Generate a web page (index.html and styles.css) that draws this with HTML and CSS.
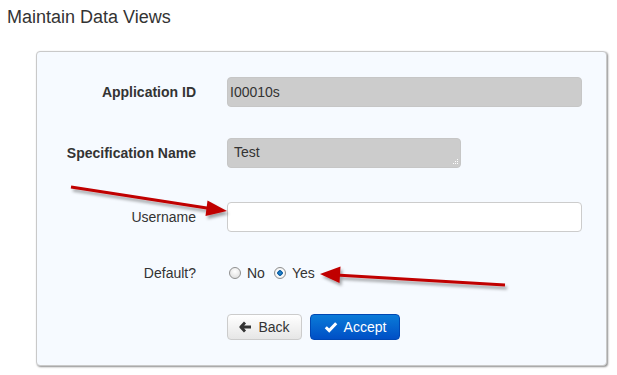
FILE: index.html
```html
<!DOCTYPE html>
<html lang="en">
<head>
  <meta charset="UTF-8">
  <meta name="viewport" content="width=device-width, initial-scale=1">
  <title>Maintain Data Views</title>
  <link rel="stylesheet" href="styles.css">
</head>

<body>
  <div class="page">
    <h1 class="page-title">Maintain Data Views</h1>

    <!-- Form panel -->
    <div class="panel">
      <div class="form-row row-app">
        <label class="form-label strong" for="app-id">Application ID</label>
        <input type="text" id="app-id" class="field field-ro" value="I00010s" readonly>
      </div>

      <div class="form-row row-spec">
        <label class="form-label strong" for="spec-name">Specification Name</label>
        <div class="area-wrap">
          <textarea id="spec-name" class="field field-ro field-area" readonly>Test</textarea>
          <svg class="grip" width="8" height="8" viewBox="0 0 8 8">
            <rect x="6" y="0" width="1" height="1" fill="#fff"/>
            <rect x="4" y="2" width="1" height="1" fill="#fff"/>
            <rect x="6" y="2" width="1" height="1" fill="#fff"/>
            <rect x="2" y="4" width="1" height="1" fill="#fff"/>
            <rect x="4" y="4" width="1" height="1" fill="#fff"/>
            <rect x="6" y="4" width="1" height="1" fill="#fff"/>
          </svg>
        </div>
      </div>

      <div class="form-row row-user">
        <label class="form-label" for="username">Username</label>
        <input type="text" id="username" class="field">
      </div>

      <div class="form-row row-default">
        <span class="form-label">Default?</span>
        <div class="radio-group">
          <label class="radio-opt"><input type="radio" name="def" class="radio"> No</label>
          <label class="radio-opt"><input type="radio" name="def" class="radio" checked> Yes</label>
        </div>
      </div>

      <div class="form-row row-actions">
        <span class="form-label"></span>
        <button class="btn btn-back">
          <svg width="13" height="12" viewBox="0 0 13 12"><path d="M6 1.5 L1.8 6 L6 10.5 M2.5 6 H12" fill="none" stroke="#333" stroke-width="2.8" stroke-linejoin="round"/></svg>
          Back
        </button>
        <button class="btn btn-accept">
          <svg width="14" height="12" viewBox="0 0 14 12"><path d="M1.8 6.2 L5.2 9.6 L12.2 2.2" fill="none" stroke="#fff" stroke-width="3"/></svg>
          Accept
        </button>
      </div>
    </div>

    <!-- Annotation arrows -->
    <svg class="arrows" width="617" height="375" viewBox="0 0 617 375">
      <defs>
        <filter id="shadow" x="-10%" y="-50%" width="120%" height="200%">
          <feDropShadow dx="2" dy="3" stdDeviation="1.5" flood-color="#000" flood-opacity="0.35"/>
        </filter>
      </defs>
      <g filter="url(#shadow)" fill="#c00000" stroke="#c00000">
        <line x1="71" y1="187" x2="210" y2="208.5" stroke-width="3"/>
        <polygon points="227,211 207.5,200.5 205.5,216" stroke="none"/>
        <line x1="505" y1="285" x2="336" y2="275" stroke-width="3"/>
        <polygon points="320,274 340.5,266.5 339.5,283" stroke="none"/>
      </g>
    </svg>
  </div>
</body>
</html>
```

FILE: styles.css
```css
* {
  margin: 0;
  padding: 0;
  box-sizing: border-box;
}
body {
  font-family: 'Liberation Sans', Arial, sans-serif;
  font-size: 14px;
  color: #333;
  background: #fff;
}
.page {
  position: relative;
  width: 617px;
  height: 375px;
}
.page-title {
  font-size: 18px;
  font-weight: normal;
  line-height: 20px;
  padding: 7px 0 0 7px;
  color: #333;
}

/* Panel */
.panel {
  margin: 24px 0 0 36px;
  width: 571px;
  height: 315px;
  padding-top: 25px;
  background: #f6faff;
  border: 1px solid #c9c9c9;
  border-radius: 4px;
  box-shadow: 1px 1px 2px rgba(0, 0, 0, 0.45);
}
.form-row {
  display: flex;
  align-items: center;
  height: 30px;
}
.row-app { margin-bottom: 31px; }
.row-spec { margin-bottom: 34px; }
.row-user { margin-bottom: 31px; }
.row-default { height: 20px; margin-bottom: 31px; }
.row-actions { height: 26px; }
.form-label {
  width: 159px;
  margin-right: 31px;
  text-align: right;
}
.form-label.strong {
  font-weight: bold;
}

/* Fields */
.field {
  width: 355px;
  height: 30px;
  padding: 0 6px;
  font-family: inherit;
  font-size: 14px;
  color: #333;
  background: #fff;
  border: 1px solid #ccc;
  border-radius: 4px;
  outline: none;
}
.field-ro {
  background: #ccc;
  border-color: #c6c6c6;
}
#app-id {
  padding-left: 2px;
}
.area-wrap {
  position: relative;
  width: 234px;
  height: 30px;
}
.field-area {
  display: block;
  width: 234px;
  resize: none;
  padding: 5px 6px;
  line-height: 16px;
  overflow: hidden;
}
.grip {
  position: absolute;
  right: 2px;
  bottom: 1px;
}

/* Radios */
.radio-group {
  display: flex;
  align-items: center;
  padding-left: 2px;
}
.radio-opt {
  display: flex;
  align-items: center;
  margin-right: 9px;
}
.radio {
  appearance: none;
  -webkit-appearance: none;
  width: 12px;
  height: 12px;
  margin-right: 6px;
  border: 1px solid #8f8f8f;
  border-radius: 50%;
  background: radial-gradient(circle at 50% 35%, #fff, #d8d8d8);
}
.radio:checked {
  background: radial-gradient(circle, #2b8fd6 0, #0b5aa0 2.5px, #fff 3px, #e0e0e0 100%);
}

/* Buttons */
.btn {
  display: flex;
  align-items: center;
  justify-content: center;
  height: 26px;
  font-family: inherit;
  font-size: 14px;
  border-radius: 4px;
  border: 1px solid #ccc;
  cursor: pointer;
}
.btn svg {
  margin-right: 6px;
}
.btn-back {
  width: 75px;
  color: #333;
  background: linear-gradient(#fff, #e6e6e6);
}
.btn-accept {
  width: 90px;
  margin-left: 8px;
  color: #fff;
  border-color: #0047b3;
  background: linear-gradient(#0a7bd8, #004fc6);
}

/* Arrows */
.arrows {
  position: absolute;
  top: 0;
  left: 0;
  pointer-events: none;
}
```
